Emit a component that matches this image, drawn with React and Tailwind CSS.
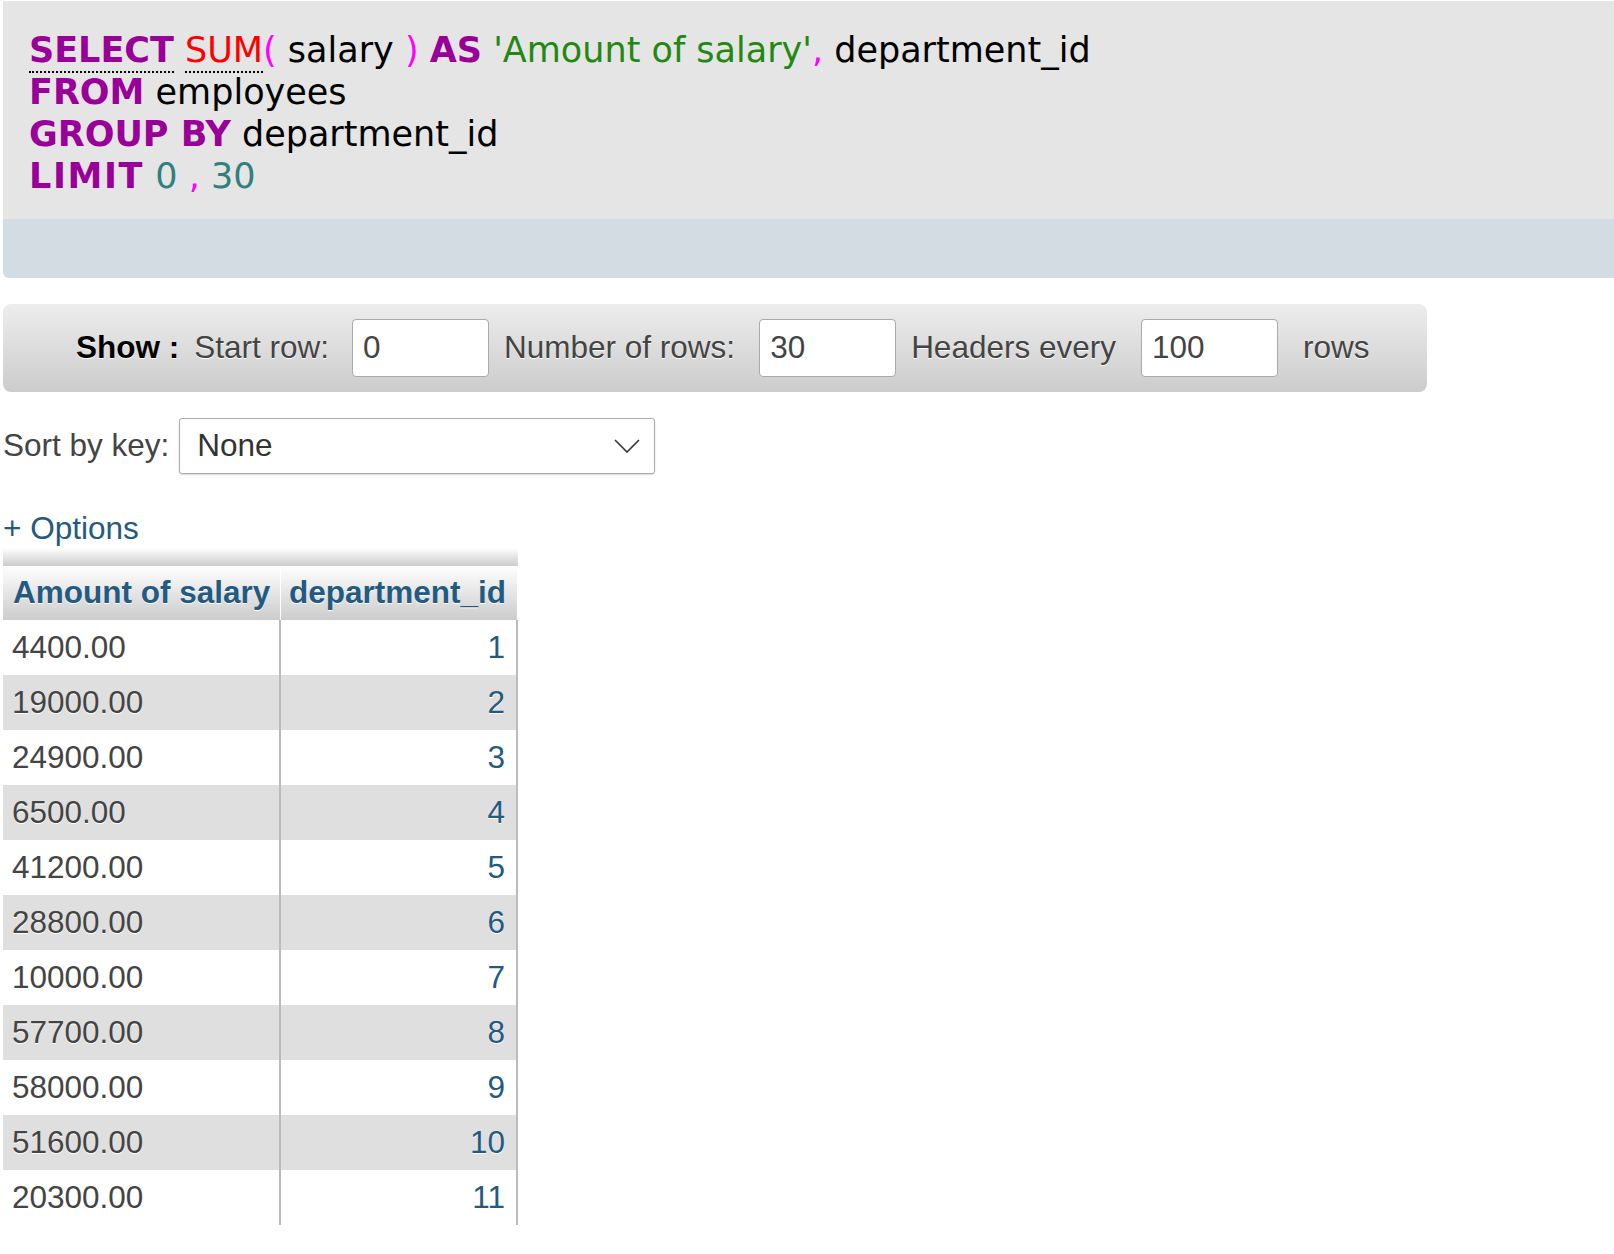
import React from "react";

const rows = [
  ["4400.00", 1],
  ["19000.00", 2],
  ["24900.00", 3],
  ["6500.00", 4],
  ["41200.00", 5],
  ["28800.00", 6],
  ["10000.00", 7],
  ["57700.00", 8],
  ["58000.00", 9],
  ["51600.00", 10],
  ["20300.00", 11],
];

const Kw = ({ children, className = "" }) => (
  <span className={`font-bold text-[#990099] ${className}`}>{children}</span>
);
const Punct = ({ children }) => <span className="text-[#ff00ff]">{children}</span>;
const Num = ({ children }) => <span className="text-[#308080]">{children}</span>;

const Field = ({ value }) => (
  <div className="w-[137px] h-[58px] bg-white border border-[#aaa] rounded-[4px] flex items-center pl-[10px] text-[#444]">
    {value}
  </div>
);

const App = () => {
  return (
    <div className="min-h-[1254px] bg-white pl-[3px] pt-px font-['Liberation_Sans',Arial,sans-serif] text-[31.5px] text-[#444] [text-shadow:0_1px_0_#fff]">
      {/* SQL query box */}
      <div className="rounded-bl-[6px] overflow-hidden [text-shadow:none]">
        <div className="bg-[#e5e5e5] pl-[26px] pt-[28px] pb-[22px] font-['DejaVu_Sans',Verdana,sans-serif] text-[35px] leading-[42px] text-black whitespace-pre">
          <div>
            <span className="border-b-2 border-dotted border-black pb-[1px]"><Kw>SELECT</Kw></span>{" "}
            <span className="border-b-2 border-dotted border-black pb-[1px] text-[#ff0000]">SUM</span>
            <Punct>(</Punct> salary <Punct>)</Punct> <Kw>AS</Kw>{" "}
            <span className="text-[#228811]">'Amount of salary'</span>
            <Punct>,</Punct> department_id
          </div>
          <div>
            <Kw>FROM</Kw> employees
          </div>
          <div>
            <Kw>GROUP BY</Kw> department_id
          </div>
          <div>
            <Kw className="tracking-[1.6px]">LIMIT</Kw> <Num>0</Num> <Punct>,</Punct> <Num>30</Num>
          </div>
        </div>
        <div className="h-[59px] bg-[#d4dce3]" />
      </div>

      {/* Show bar */}
      <div className="mt-[26px] w-[1424px] h-[88px] rounded-[8px] bg-gradient-to-b from-[#ededed] to-[#cccccc] flex items-center pl-[73px]">
        <span className="font-bold text-black">Show :</span>
        <span className="ml-[15px]">Start row:</span>
        <div className="ml-[23px]"><Field value="0" /></div>
        <span className="ml-[15px]">Number of rows:</span>
        <div className="ml-[24px]"><Field value="30" /></div>
        <span className="ml-[15px]">Headers every</span>
        <div className="ml-[25px]"><Field value="100" /></div>
        <span className="ml-[25px]">rows</span>
      </div>

      {/* Sort by key */}
      <div className="mt-[26px] flex items-center">
        <span>Sort by key:</span>
        <div className="ml-[10px] w-[476px] h-[56px] bg-white border border-[#aaa] rounded-[3px] shadow-[0_1px_2px_rgba(0,0,0,0.15)] flex items-center justify-between pl-[17px] pr-[14px] text-[#333]">
          <span>None</span>
          <svg width="26" height="14" viewBox="0 0 26 14" fill="none">
            <polyline points="1,1 13,13 25,1" stroke="#333" strokeWidth="1.6" />
          </svg>
        </div>
      </div>

      {/* Options */}
      <div className="mt-[36px] h-[36px] leading-[36px] text-[#235a81]">+ Options</div>

      {/* Result table */}
      <div className="mt-[2px] w-[515px]">
        <div className="h-[18px] bg-gradient-to-b from-white to-[#cccccc]" />
        <table className="w-full border-collapse">
          <thead>
            <tr className="h-[54px] bg-gradient-to-b from-white to-[#cccccc]">
              <th className="w-[277px] text-left pl-[10px] font-bold text-[#235a81] border-r border-white">Amount of salary</th>
              <th className="text-right pr-[11px] font-bold text-[#235a81]">department_id</th>
            </tr>
          </thead>
          <tbody>
            {rows.map(([amount, id], i) => (
              <tr key={id} className={`h-[55px] ${i % 2 === 1 ? "bg-[#dfdfdf]" : "bg-white"}`}>
                <td className="pl-[9px] text-[#444] border-r-2 border-[#bbb]">{amount}</td>
                <td className="text-right pr-[11px] text-[#235a81] border-r-2 border-[#bbb]">{id}</td>
              </tr>
            ))}
          </tbody>
        </table>
      </div>
    </div>
  );
};

export default App;
